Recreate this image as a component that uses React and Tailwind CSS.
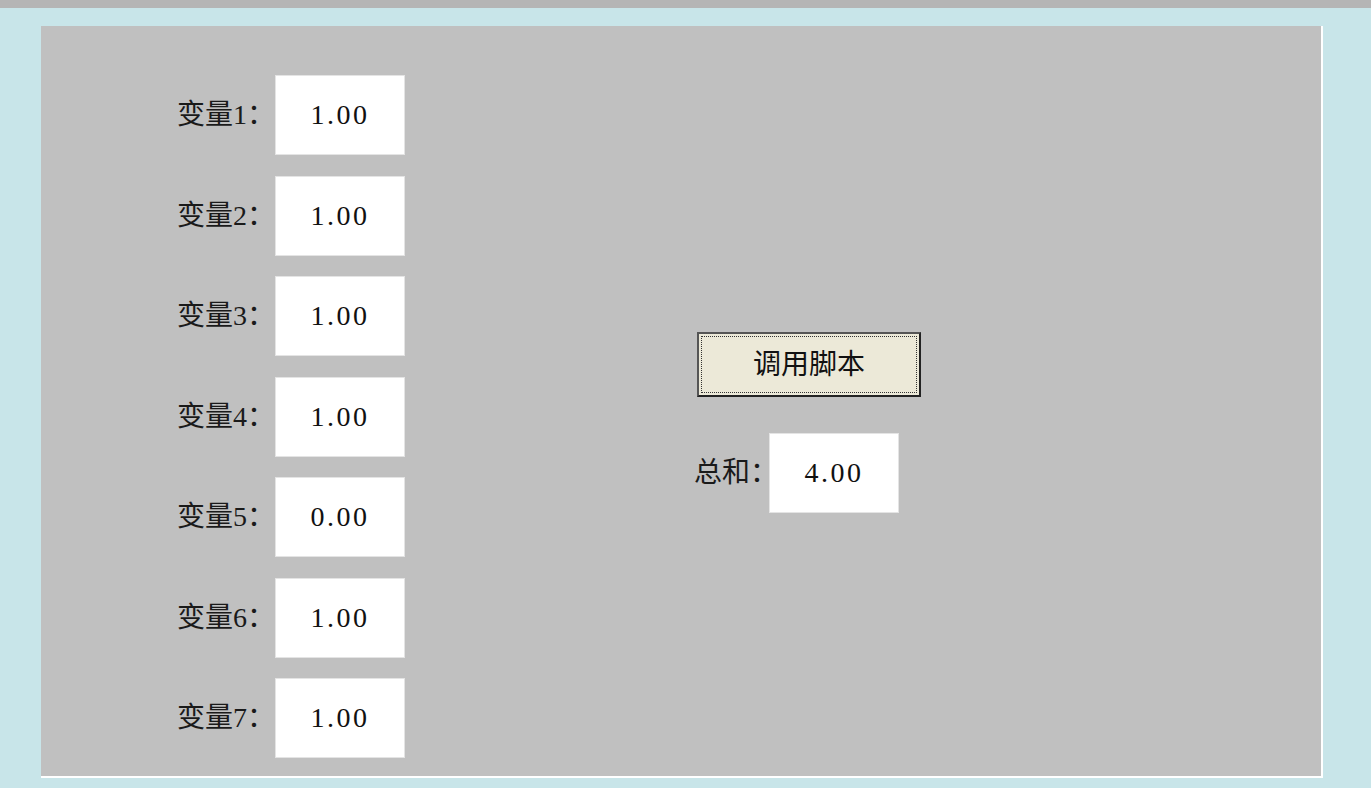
import React from "react";

const font = { fontFamily: '"Liberation Serif", "Noto Sans CJK SC", serif' };

const Field = ({ value }) => (
  <div className="w-[130px] h-[80px] bg-white border border-[#e4e4e4] flex items-center justify-center text-[28px] text-[#111] tracking-[2.5px]">
    {value}
  </div>
);

const rows = ["1.00", "1.00", "1.00", "1.00", "0.00", "1.00", "1.00"];

export default function App() {
  return (
    <div className="w-[1371px] h-[788px] bg-[#c8e5e9] flex flex-col overflow-hidden" style={font}>
      <div className="h-[8px] bg-[#b5b5b5] shrink-0" />
      <div className="pl-[41px] pt-[18px]">
        <div className="w-[1282px] h-[752px] bg-[#c0c0c0] border-r-2 border-b-2 border-white flex">
          {/* variables */}
          <div className="pl-[124px] pt-[49px] flex flex-col gap-[20.5px]">
            {rows.map((v, i) => (
              <div key={i} className="flex items-center">
                <div className="w-[110px] text-right text-[28px] text-[#1a1a1a] leading-none whitespace-nowrap">
                  变量{i + 1}：
                </div>
                <Field value={v} />
              </div>
            ))}
          </div>

          {/* right side */}
          <div className="ml-[289px] pt-[306px] flex flex-col">
            <button className="ml-[3px] w-[224px] h-[65px] bg-[#ece9d8] border-2 border-t-[#555] border-l-[#555] border-r-[#222] border-b-[#222] p-[2px] text-[#111]">
              <div className="w-full h-full border border-dotted border-[#333] flex items-center justify-center text-[28px] leading-none">
                调用脚本
              </div>
            </button>
            <div className="mt-[36px] flex items-center">
              <div className="w-[75px] text-[28px] text-[#1a1a1a] leading-none whitespace-nowrap">总和：</div>
              <Field value="4.00" />
            </div>
          </div>
        </div>
      </div>
    </div>
  );
}
